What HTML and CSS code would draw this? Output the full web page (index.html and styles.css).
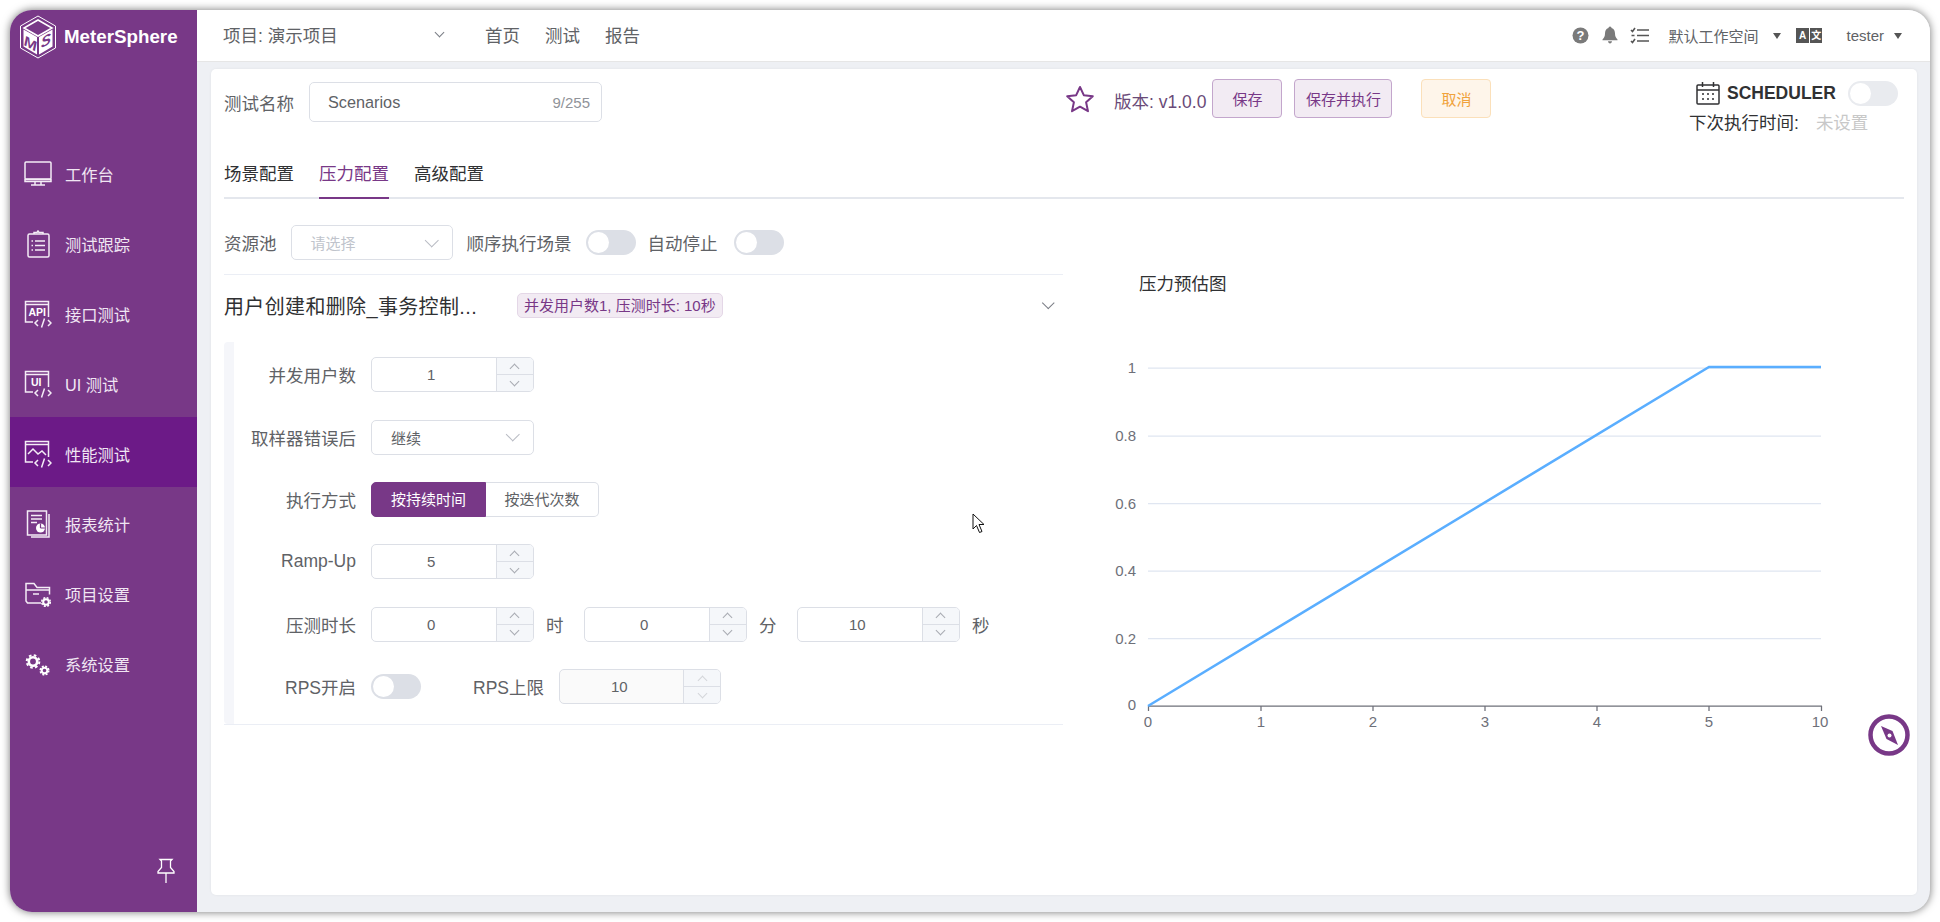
FILE: index.html
```html
<!DOCTYPE html>
<html lang="zh">
<head>
<meta charset="utf-8">
<title>MeterSphere</title>
<link rel="stylesheet" href="styles.css">
</head>
<body>
<div class="window">
  <aside class="sidebar">
    <div class="logo">
      <svg class="logo-mark" width="38" height="44" viewBox="0 0 38 44">
        <polygon points="19,1 36.5,11 36.5,33 19,43 1.5,33 1.5,11" fill="none" stroke="#fff" stroke-width="1"/>
        <polygon points="19,5 33,13 19,21 5,13" fill="none" stroke="#fff" stroke-width="1.6"/>
        <polygon points="4.5,14.5 18,22 18,39.5 4.5,31.5" fill="#fff"/>
        <polygon points="33.5,14.5 20,22 20,39.5 33.5,31.5" fill="#fff"/>
        <text class="logo-m" transform="translate(5,30) skewY(30)">M</text>
        <text class="logo-m" transform="translate(22,33.500) skewY(-30)">S</text>
      </svg>
      <span class="logo-text">MeterSphere</span>
    </div>
    <nav class="nav">
      <a class="nav-item">
        <svg class="nav-icon" viewBox="0 0 28 26"><rect x="1" y="1" width="26" height="17" rx="1"/><path d="M1 18.5h26v2H1z"/><path d="M11 21v2.5M17 21v2.5M7 24h14"/></svg>
        <span>工作台</span>
      </a>
      <a class="nav-item">
        <svg class="nav-icon" viewBox="0 0 28 28"><rect x="4" y="4" width="21" height="23" rx="1.5"/><path d="M10 4V2.5h3l1-1.5 1 1.5h4V4"/><path d="M11 11h10M11 15.5h10M11 20h10M7.5 11h1.5M7.5 15.5h1.5M7.5 20h1.5"/></svg>
        <span>测试跟踪</span>
      </a>
      <a class="nav-item">
        <svg class="nav-icon" viewBox="0 0 28 28"><path d="M9 22H1.500V1.500h23V17"/><path d="M1.500 4.500h23"/><text class="icon-text" x="4.500" y="15.500">API</text><path d="M14 20l-3 3 3 3M24 20l3 3-3 3M20.500 18.500l-3 9"/></svg>
        <span>接口测试</span>
      </a>
      <a class="nav-item">
        <svg class="nav-icon" viewBox="0 0 28 28"><path d="M9 22H1.500V1.500h23V17"/><path d="M1.500 4.500h23"/><text class="icon-text" x="7" y="16">UI</text><path d="M14 20l-3 3 3 3M24 20l3 3-3 3M20.500 18.500l-3 9"/></svg>
        <span>UI 测试</span>
      </a>
      <a class="nav-item active">
        <svg class="nav-icon" viewBox="0 0 28 28"><path d="M9 22H1.500V1.500h23V17"/><path d="M1.500 4.500h23"/><path d="M4 14l5-5 5 5 4-3 4 4"/><path d="M14 20l-3 3 3 3M24 20l3 3-3 3M20.500 18.500l-3 9"/></svg>
        <span>性能测试</span>
      </a>
      <a class="nav-item">
        <svg class="nav-icon" viewBox="0 0 28 28"><rect x="3.500" y="1" width="19" height="24"/><path d="M25 4v23H7"/><path d="M7 5.500h11M7 9h11M7 12.500h6"/><circle class="solid" cx="16.500" cy="18" r="4.500"/><path class="notch" d="M16.500 18v-4.500M16.500 18H21"/></svg>
        <span>报表统计</span>
      </a>
      <a class="nav-item">
        <svg class="nav-icon" viewBox="0 0 28 28"><path d="M17 23H3.500L2 21V3.500h8l3 4h12.500v7"/><path d="M2 10h23"/><path d="M9 14h6"/><circle class="ring-s" cx="22" cy="22" r="2.800"/><circle class="teeth-s" cx="22" cy="22" r="4.300"/></svg>
        <span>项目设置</span>
      </a>
      <a class="nav-item">
        <svg class="nav-icon" viewBox="0 0 28 28"><circle class="ring-b" cx="9" cy="11.500" r="4.200"/><circle class="teeth-b" cx="9" cy="11.500" r="6.300"/><circle class="ring-s" cx="20.500" cy="20.500" r="2.800"/><circle class="teeth-s" cx="20.500" cy="20.500" r="4.300"/></svg>
        <span>系统设置</span>
      </a>
    </nav>
    <div class="pin">
      <svg width="18" height="26" viewBox="0 0 18 26" fill="none" stroke="#fff" stroke-width="1.300"><path d="M3 1.500h12l-1.500 1.500v6.500l3.500 4v1.500H1v-1.500l3.500-4V3z"/><path d="M9 15v10"/></svg>
    </div>
  </aside>

  <main class="main">
    <header class="topbar">
      <div class="project"><span>项目: 演示项目</span><i class="chev down dark"></i></div>
      <nav class="topnav"><a>首页</a><a>测试</a><a>报告</a></nav>
      <div class="top-right">
        <svg class="ti help" width="17" height="17" viewBox="0 0 17 17"><circle cx="8.500" cy="8.500" r="8" fill="#7a7a7a"/><text class="q" x="8.500" y="13">?</text></svg>
        <svg class="ti" width="16" height="18" viewBox="0 0 16 18"><path d="M8 0.500c1 0 1.500.8 1.500 1.500C12 2.700 13 5 13 7.500c0 3 1 4.500 2.500 6v.8H.5v-.8C2 12 3 10.500 3 7.500 3 5 4 2.700 6.500 2 6.500 1.300 7 .5 8 .5zM6 15.300h4c0 1.200-1 2.200-2 2.200s-2-1-2-2.200z" fill="#7a7a7a"/></svg>
        <svg class="ti list" width="19" height="17" viewBox="0 0 19 17" fill="none" stroke="#555" stroke-width="1.600"><path d="M7 3h12M7 8.500h12M7 14h12"/><path d="M1 3l1.500 1.500L5 1M1.500 8.500h3M1 14l1.500 1.500L5 12"/></svg>
        <span class="ws">默认工作空间</span><i class="caret"></i>
        <span class="lang"><b>A</b><b>文</b></span>
        <span class="user">tester</span><i class="caret"></i>
      </div>
    </header>

    <div class="content">
      <section class="card">
        <div class="head-row">
          <div class="name-group">
            <label class="lbl">测试名称</label>
            <div class="name-input"><span>Scenarios</span><em>9/255</em></div>
          </div>
          <svg class="star" width="30" height="28" viewBox="0 0 30 28" fill="none" stroke="#783887" stroke-width="2" stroke-linejoin="round"><path d="M15 2l3.800 8.200 9 1-6.700 6.100 1.900 8.900L15 21.700l-8 4.500 1.900-8.900L2.200 11.200l9-1z"/></svg>
          <span class="version">版本: v1.0.0</span>
          <button class="btn w70">保存</button>
          <button class="btn w98">保存并执行</button>
          <button class="btn warn w70">取消</button>
          <div class="sched">
            <div class="sched-top">
              <svg width="24" height="23" viewBox="0 0 24 23" fill="none" stroke="#303133" stroke-width="1.500"><rect x="1" y="3" width="22" height="19" rx="1"/><path d="M1 8h22M6.500 0v5M17.500 0v5"/><path d="M6 12h2M11 12h2M16 12h2M6 17h2M11 17h2M16 17h2"/></svg>
              <strong>SCHEDULER</strong>
              <i class="toggle faint"></i>
            </div>
            <div class="sched-next">下次执行时间:<span>未设置</span></div>
          </div>
        </div>

        <div class="tabs"><a>场景配置</a><a class="on">压力配置</a><a>高级配置</a></div>

        <div class="cols">
          <div class="left">
            <div class="pool-row">
              <label class="lbl">资源池</label>
              <div class="select pool"><span class="ph">请选择</span><i class="chev down wide"></i></div>
              <label class="lbl">顺序执行场景</label>
              <i class="toggle"></i>
              <label class="lbl">自动停止</label>
              <i class="toggle"></i>
            </div>
            <div class="collapse">
              <div class="collapse-head">
                <span class="c-title">用户创建和删除_事务控制...</span>
                <span class="tag">并发用户数1, 压测时长: 10秒</span>
                <i class="chev down end"></i>
              </div>
              <div class="form">
                <div class="f-row">
                  <label class="f-lbl">并发用户数</label>
                  <div class="num"><span class="val">1</span><span class="steps"><i><b class="chev up"></b></i><i><b class="chev down"></b></i></span></div>
                </div>
                <div class="f-row">
                  <label class="f-lbl">取样器错误后</label>
                  <div class="select sm"><span>继续</span><i class="chev down wide"></i></div>
                </div>
                <div class="f-row radio-row">
                  <label class="f-lbl">执行方式</label>
                  <div class="radio"><span class="r on">按持续时间</span><span class="r">按迭代次数</span></div>
                </div>
                <div class="f-row">
                  <label class="f-lbl">Ramp-Up</label>
                  <div class="num"><span class="val">5</span><span class="steps"><i><b class="chev up"></b></i><i><b class="chev down"></b></i></span></div>
                </div>
                <div class="f-row">
                  <label class="f-lbl">压测时长</label>
                  <div class="num"><span class="val">0</span><span class="steps"><i><b class="chev up"></b></i><i><b class="chev down"></b></i></span></div>
                  <span class="unit">时</span>
                  <div class="num"><span class="val">0</span><span class="steps"><i><b class="chev up"></b></i><i><b class="chev down"></b></i></span></div>
                  <span class="unit">分</span>
                  <div class="num"><span class="val">10</span><span class="steps"><i><b class="chev up"></b></i><i><b class="chev down"></b></i></span></div>
                  <span class="unit">秒</span>
                </div>
                <div class="f-row last">
                  <label class="f-lbl">RPS开启</label>
                  <i class="toggle"></i>
                  <label class="lbl rps">RPS上限</label>
                  <div class="num off"><span class="val">10</span><span class="steps"><i><b class="chev up"></b></i><i><b class="chev down"></b></i></span></div>
                </div>
              </div>
            </div>
          </div>
          <div class="right">
            <div class="chart-title">压力预估图</div>
            <svg class="chart" width="810" height="450" viewBox="1063 294 810 450">
              <g class="grid">
                <path d="M1148 369H1821M1148 437H1821M1148 504.500H1821M1148 572H1821M1148 639.500H1821"/>
              </g>
              <path class="axis" d="M1148 707H1822M1148.500 707v5M1261 707v5M1373 707v5M1485 707v5M1597 707v5M1709 707v5M1821.500 707v5"/>
              <path class="series" d="M1148 707L1709 368H1821"/>
              <g class="yl">
                <text x="1136" y="374">1</text>
                <text x="1136" y="442">0.8</text>
                <text x="1136" y="510">0.6</text>
                <text x="1136" y="577">0.4</text>
                <text x="1136" y="645">0.2</text>
                <text x="1136" y="711">0</text>
              </g>
              <g class="xl">
                <text x="1148" y="728">0</text>
                <text x="1261" y="728">1</text>
                <text x="1373" y="728">2</text>
                <text x="1485" y="728">3</text>
                <text x="1597" y="728">4</text>
                <text x="1709" y="728">5</text>
                <text x="1820" y="728">10</text>
              </g>
            </svg>
          </div>
        </div>
      </section>
    </div>
  </main>

  <svg class="compass" width="42" height="42" viewBox="0 0 42 42"><circle cx="21" cy="21" r="18.500" fill="#fff" stroke="#783887" stroke-width="4.500"/><path d="M13 12l11.500 5 5.500 14-11.500-6z" fill="#783887"/><circle cx="21.500" cy="21.500" r="2" fill="#fff"/></svg>
</div>
<svg class="cursor" width="14" height="21" viewBox="0 0 14 21"><path d="M1 1v15l3.500-3.500 3 7 2.500-1-3-7h5z" fill="#fff" stroke="#111" stroke-width="1"/></svg>
</body>
</html>
```
FILE: styles.css
```css
* { box-sizing: border-box; }
html, body { margin: 0; height: 100%; }
body {
  width: 1940px;
  height: 922px;
  padding: 10px;
  background: #fff;
  overflow: hidden;
  position: relative;
  font-family: "Liberation Sans", "Noto Sans CJK SC", sans-serif;
  color: #606266;
  font-size: 17.5px;
}
i, em { font-style: normal; }
.window {
  position: relative;
  display: flex;
  width: 1920px;
  height: 902px;
  border-radius: 22px;
  overflow: hidden;
  box-shadow: 0 0 9px rgba(0, 0, 0, .55);
  background: #eef0f4;
}

/* sidebar */
.sidebar {
  width: 187px;
  flex: none;
  background: #783887;
  display: flex;
  flex-direction: column;
  color: #f0e6f3;
}
.logo {
  height: 127px;
  display: flex;
  align-items: flex-start;
  padding: 5px 0 0 9px;
  flex: none;
}
.logo-mark { flex: none; }
.logo-m { font: italic 700 15px "Liberation Sans", sans-serif; fill: #783887; }
.logo-text {
  margin: 9px 0 0 7px;
  font-weight: 700;
  font-size: 18.750px;
  line-height: 26px;
  color: #fff;
}
.nav { display: flex; flex-direction: column; }
.nav-item {
  height: 70px;
  display: flex;
  align-items: center;
  padding: 3px 0 0 14px;
  font-size: 16.25px;
}
.nav-item.active { background: #6c1a87; }
.nav-icon {
  width: 28px;
  height: 28px;
  margin-right: 13px;
  flex: none;
  fill: none;
  stroke: #f4ecf6;
  stroke-width: 1.500;
}
.icon-text { font: 700 10.500px "Liberation Sans", sans-serif; fill: #fff; stroke: none; }
.nav-icon .solid { fill: #fff; stroke: none; }
.nav-icon .notch { stroke: #783887; stroke-width: 1.200; }
.nav-icon .ring-s { stroke: #fff; stroke-width: 2; }
.nav-icon .teeth-s { stroke: #fff; stroke-width: 1.500; stroke-dasharray: 2 1.400; }
.nav-icon .ring-b { stroke: #fff; stroke-width: 2.600; }
.nav-icon .teeth-b { stroke: #fff; stroke-width: 2; stroke-dasharray: 2.600 2.350; }
.pin {
  margin-top: auto;
  padding: 0 0 28px 147px;
  line-height: 0;
}

/* top bar */
.main { flex: 1; display: flex; flex-direction: column; min-width: 0; }
.topbar {
  height: 52px;
  flex: none;
  background: #fff;
  border-bottom: 1px solid #e6e6e6;
  display: flex;
  align-items: center;
  padding: 0 28px 2px 26px;
}
.project { display: flex; align-items: center; width: 262px; }
.project .chev { margin-left: 98px; }
.topnav { display: flex; gap: 25px; }
.topnav a { color: #606266; }
.top-right { margin-left: auto; margin-top: 1px; display: flex; align-items: center; font-size: 15px; }
.ti { margin-right: 12px; flex: none; }
.ti.help { margin-right: 13px; }
.ti.list { margin-right: 19px; }
.ws { color: #606266; }
.user { color: #606266; margin-left: 24px; }
.caret {
  width: 0;
  height: 0;
  margin: 1px 0 0 15px;
  border: 4px solid transparent;
  border-top: 6px solid #555;
  border-bottom: 0;
}
.user + .caret { margin-left: 10px; }
.lang { display: flex; margin-left: 15px; gap: 1px; }
.lang b {
  width: 12.500px;
  height: 15px;
  background: #555;
  color: #fff;
  font-size: 10px;
  line-height: 15px;
  text-align: center;
  font-weight: 700;
}

/* card */
.content { flex: 1; display: flex; padding: 7px 13px 17px 14px; min-height: 0; }
.card {
  flex: 1;
  background: #fff;
  border-radius: 5px;
  padding: 10px 13px 0;
  box-shadow: 0 0 3px rgba(0, 0, 0, .06);
}
.head-row { display: flex; align-items: flex-start; height: 71px; }
.name-group { display: flex; align-items: center; margin-top: 3px; }
.lbl { color: #606266; white-space: nowrap; }
.name-input {
  width: 293px;
  height: 40px;
  margin-left: 15px;
  border: 1px solid #dcdfe6;
  border-radius: 5px;
  padding: 0 11px 0 18px;
  display: flex;
  align-items: center;
  justify-content: space-between;
  font-size: 16.250px;
}
.name-input em { font-size: 15px; color: #909399; }
.star { margin: 6px 0 0 463px; flex: none; }
.version { margin: 9px 6px 0 19px; color: #6a4a78; font-size: 17.500px; white-space: nowrap; }
.btn {
  height: 39px;
  padding: 0;
  margin-right: 12px;
  border: 1px solid #c3a6cc;
  border-radius: 4px;
  background: #f2ebf3;
  color: #783887;
  font: 15px "Liberation Sans", "Noto Sans CJK SC", sans-serif;
}
.w70 { width: 70px; }
.w98 { width: 98px; }
.btn.warn { margin-left: 17px; background: #fef5ea; border-color: #fbe0ba; color: #f0a23c; }
.sched { margin-left: auto; width: 215px; display: flex; flex-direction: column; }
.sched-top { display: flex; align-items: center; padding-left: 7px; height: 28px; }
.sched-top strong { margin-left: 7px; color: #303133; font-size: 17.500px; }
.toggle {
  display: block;
  width: 50px;
  height: 25px;
  border-radius: 13px;
  background: #dcdfe6;
  position: relative;
  flex: none;
}
.toggle::after {
  content: "";
  position: absolute;
  left: 2px;
  top: 2px;
  width: 21px;
  height: 21px;
  border-radius: 50%;
  background: #fff;
}
.toggle.faint { background: #e9ebef; margin-left: 12px; }
.sched-next { margin-top: 2px; color: #303133; font-size: 17.500px; white-space: nowrap; }
.sched-next span { margin-left: 17px; color: #c8c8c8; }

/* tabs */
.tabs {
  display: flex;
  gap: 25px;
  height: 49px;
  border-bottom: 2.500px solid #e4e7ed;
  align-items: stretch;
}
.tabs a { height: 49px; padding-top: 12px; color: #303133; line-height: 24px; }
.tabs a.on { color: #783887; border-bottom: 2.500px solid #783887; }

/* columns */
.cols { display: flex; margin-top: 26px; }
.left { width: 839px; flex: none; }
.right { flex: 1; padding-left: 76px; position: relative; }
.pool-row { display: flex; align-items: center; height: 35px; }
.select {
  border: 1px solid #dcdfe6;
  border-radius: 5px;
  display: flex;
  align-items: center;
  justify-content: space-between;
  font-size: 15px;
  padding: 0 15px 0 19px;
}
.select.pool { width: 162px; height: 35px; margin: 0 14px 0 14px; }
.pool-row .toggle { margin: 0 12px 0 14px; }
.pool-row .lbl + .toggle + .lbl + .toggle { margin-left: 16px; }
.ph { color: #c0c4cc; }
.chev {
  display: block;
  width: 7px;
  height: 7px;
  border-left: 1px solid #a8abb2;
  border-top: 1px solid #a8abb2;
}
.chev.up { transform: translateY(2px) rotate(45deg); }
.chev.down { transform: translateY(-2px) rotate(225deg); }
.chev.wide { width: 9.500px; height: 9.500px; border-color: #b9bcc4; }
.chev.dark { border-color: #7a7d85; }
.chev.end { margin-left: auto; margin-right: 11px; width: 8.500px; height: 8.500px; border-color: #7a7d85; }

/* collapse */
.collapse { margin-top: 14px; border-top: 1px solid #ebeef5; border-bottom: 1px solid #ebeef5; }
.collapse-head { height: 60px; display: flex; align-items: center; }
.c-title { width: 293px; font-size: 20px; color: #303133; white-space: nowrap; letter-spacing: .35px; }
.tag {
  height: 25px;
  padding: 0 6px 0 6px;
  border: 1px solid #e4d7e7;
  border-radius: 5px;
  background: #f2ebf3;
  color: #783887;
  font-size: 15px;
  line-height: 23px;
  white-space: nowrap;
}
.form {
  margin-top: 7px;
  border-left: 10px solid #f5f6fa;
  border-radius: 4px 0 0 4px;
  padding: 15px 0 20px;
}
.f-row { display: flex; align-items: center; height: 35px; margin-bottom: 27.500px; }
.f-row.radio-row { margin-top: 2px; margin-bottom: 27px; }
.f-row.last { margin-bottom: 0; }
.f-lbl { width: 122px; margin-right: 15px; text-align: right; color: #606266; flex: none; }
.num {
  width: 162.500px;
  height: 35px;
  flex: none;
  border: 1px solid #dcdfe6;
  border-radius: 5px;
  display: flex;
  overflow: hidden;
  font-size: 15px;
}
.val { flex: 1; text-align: center; line-height: 33px; padding-right: 5px; }
.steps {
  width: 37px;
  flex: none;
  background: #f5f7fa;
  border-left: 1px solid #dcdfe6;
  display: flex;
  flex-direction: column;
}
.steps i { flex: 1; display: flex; align-items: center; justify-content: center; }
.steps i + i { border-top: 1px solid #dcdfe6; }
.num.off { background: #fafafa; }
.num.off .chev { border-color: #d4d6da; }
.unit { width: 50.500px; padding-left: 12.500px; flex: none; }
.select.sm { width: 162.500px; height: 35px; }
.radio { display: flex; height: 35px; font-size: 15px; }
.r {
  width: 113px;
  text-align: center;
  line-height: 33px;
  border: 1px solid #dcdfe6;
  border-left: 0;
  border-radius: 0 5px 5px 0;
}
.r.on {
  width: 115px;
  background: #783887;
  border: 1px solid #783887;
  color: #fff;
  border-radius: 5px 0 0 5px;
}
.rps { margin: 0 15px 0 52px; }

/* chart */
.chart-title { height: 22px; margin-top: 47.500px; line-height: 22px; color: #303133; }
.chart { display: block; margin: -1.500px 0 0 -76px; }
.grid path { fill: none; stroke: #e0e6f1; stroke-width: 1.250; }
.axis { fill: none; stroke: #6e7079; stroke-width: 1.250; }
.series { fill: none; stroke: #5aaeff; stroke-width: 2.500; }
.yl text { font-size: 15px; fill: #6e7079; text-anchor: end; }
.xl text { font-size: 15px; fill: #6e7079; text-anchor: middle; }
.q { font: 700 13px "Liberation Sans", sans-serif; fill: #fff; text-anchor: middle; }

/* floating */
.compass { position: absolute; left: 1858px; top: 704px; }
.cursor { position: absolute; left: 972px; top: 513px; }
```
